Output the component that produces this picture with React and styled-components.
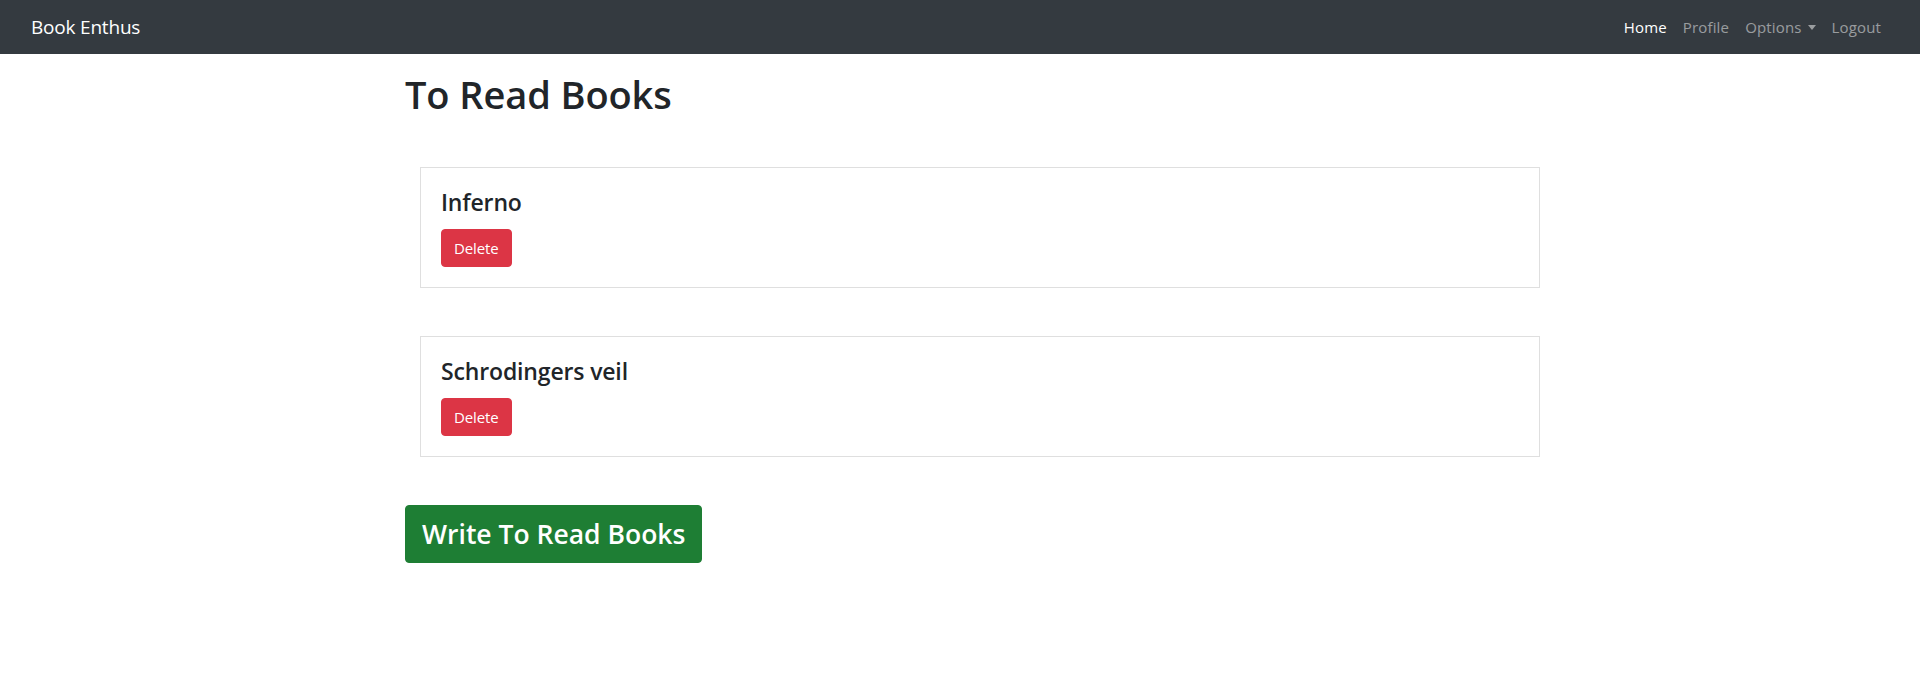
import React from "react";
import styled, { createGlobalStyle } from "styled-components";

const Global = createGlobalStyle`
  html, body { margin: 0; padding: 0; background: #fff; }
  body {
    font-family: "Open Sans", "Noto Sans", "Liberation Sans", sans-serif;
    color: #212529;
    font-size: 16px;
    line-height: 1.5;
  }
  * { box-sizing: border-box; }
`;

const NavBar = styled.nav`
  height: 54px;
  background: #343a40;
  display: flex;
  align-items: center;
  justify-content: space-between;
  padding: 0 31px;
`;

const Brand = styled.a`
  color: #fff;
  font-size: 19px;
  line-height: 30px;
  letter-spacing: -0.2px;
  text-decoration: none;
`;

const NavList = styled.ul`
  list-style: none;
  display: flex;
  margin: 0;
  padding: 0;
`;

const NavLink = styled.a`
  display: flex;
  align-items: center;
  padding: 8px 8px;
  font-size: 15px;
  letter-spacing: 0.15px;
  line-height: 24px;
  color: ${(p) => (p.$active ? "#fff" : "rgba(255,255,255,0.5)")};
  text-decoration: none;
`;

const Caret = styled.span`
  display: inline-block;
  margin-left: 6px;
  width: 0;
  height: 0;
  border-top: 5px solid rgba(255,255,255,0.5);
  border-left: 4.5px solid transparent;
  border-right: 4.5px solid transparent;
`;

const Container = styled.main`
  width: 1140px;
  margin: 0 auto;
  padding: 16px 15px 0;
  display: flex;
  flex-direction: column;
  align-items: flex-start;
`;

const Title = styled.h1`
  margin: 0 0 49px;
  font-size: 38px;
  font-weight: 600;
  line-height: 48px;
  letter-spacing: -0.1px;
`;

const BookList = styled.div`
  display: flex;
  flex-direction: column;
  gap: 48px;
  margin-left: 15px;
  margin-bottom: 48px;
`;

const Card = styled.section`
  width: 1120px;
  border: 1px solid rgba(0,0,0,0.125);
  padding: 20px;
  background: #fff;
`;

const CardTitle = styled.h4`
  margin: 0 0 12px;
  font-size: 23px;
  font-weight: 600;
  line-height: 29px;
  letter-spacing: -0.15px;
`;

const Button = styled.button`
  font-family: inherit;
  border: 1px solid ${(p) => p.$bg};
  background: ${(p) => p.$bg};
  color: #fff;
  border-radius: 4px;
  padding: ${(p) => (p.$large ? "8px 16px" : "6px 12px")};
  font-size: ${(p) => (p.$large ? "26.5px" : "15px")};
  font-weight: ${(p) => (p.$large ? 600 : 400)};
  line-height: ${(p) => (p.$large ? "40px" : "24px")};
  letter-spacing: ${(p) => (p.$large ? "0px" : "-0.1px")};
  cursor: pointer;
`;

const books = ["Inferno", "Schrodingers veil"];

export default function App() {
  return (
    <>
      <Global />
      <NavBar>
        <Brand href="#">Book Enthus</Brand>
        <NavList>
          <li><NavLink $active href="#">Home</NavLink></li>
          <li><NavLink href="#">Profile</NavLink></li>
          <li><NavLink href="#">Options<Caret /></NavLink></li>
          <li><NavLink href="#">Logout</NavLink></li>
        </NavList>
      </NavBar>
      <Container>
        <Title>To Read Books</Title>
        <BookList>
          {books.map((b) => (
            <Card key={b}>
              <CardTitle>{b}</CardTitle>
              <Button $bg="#dc3545">Delete</Button>
            </Card>
          ))}
        </BookList>
        <Button $large $bg="#1e7e34">Write To Read Books</Button>
      </Container>
    </>
  );
}
